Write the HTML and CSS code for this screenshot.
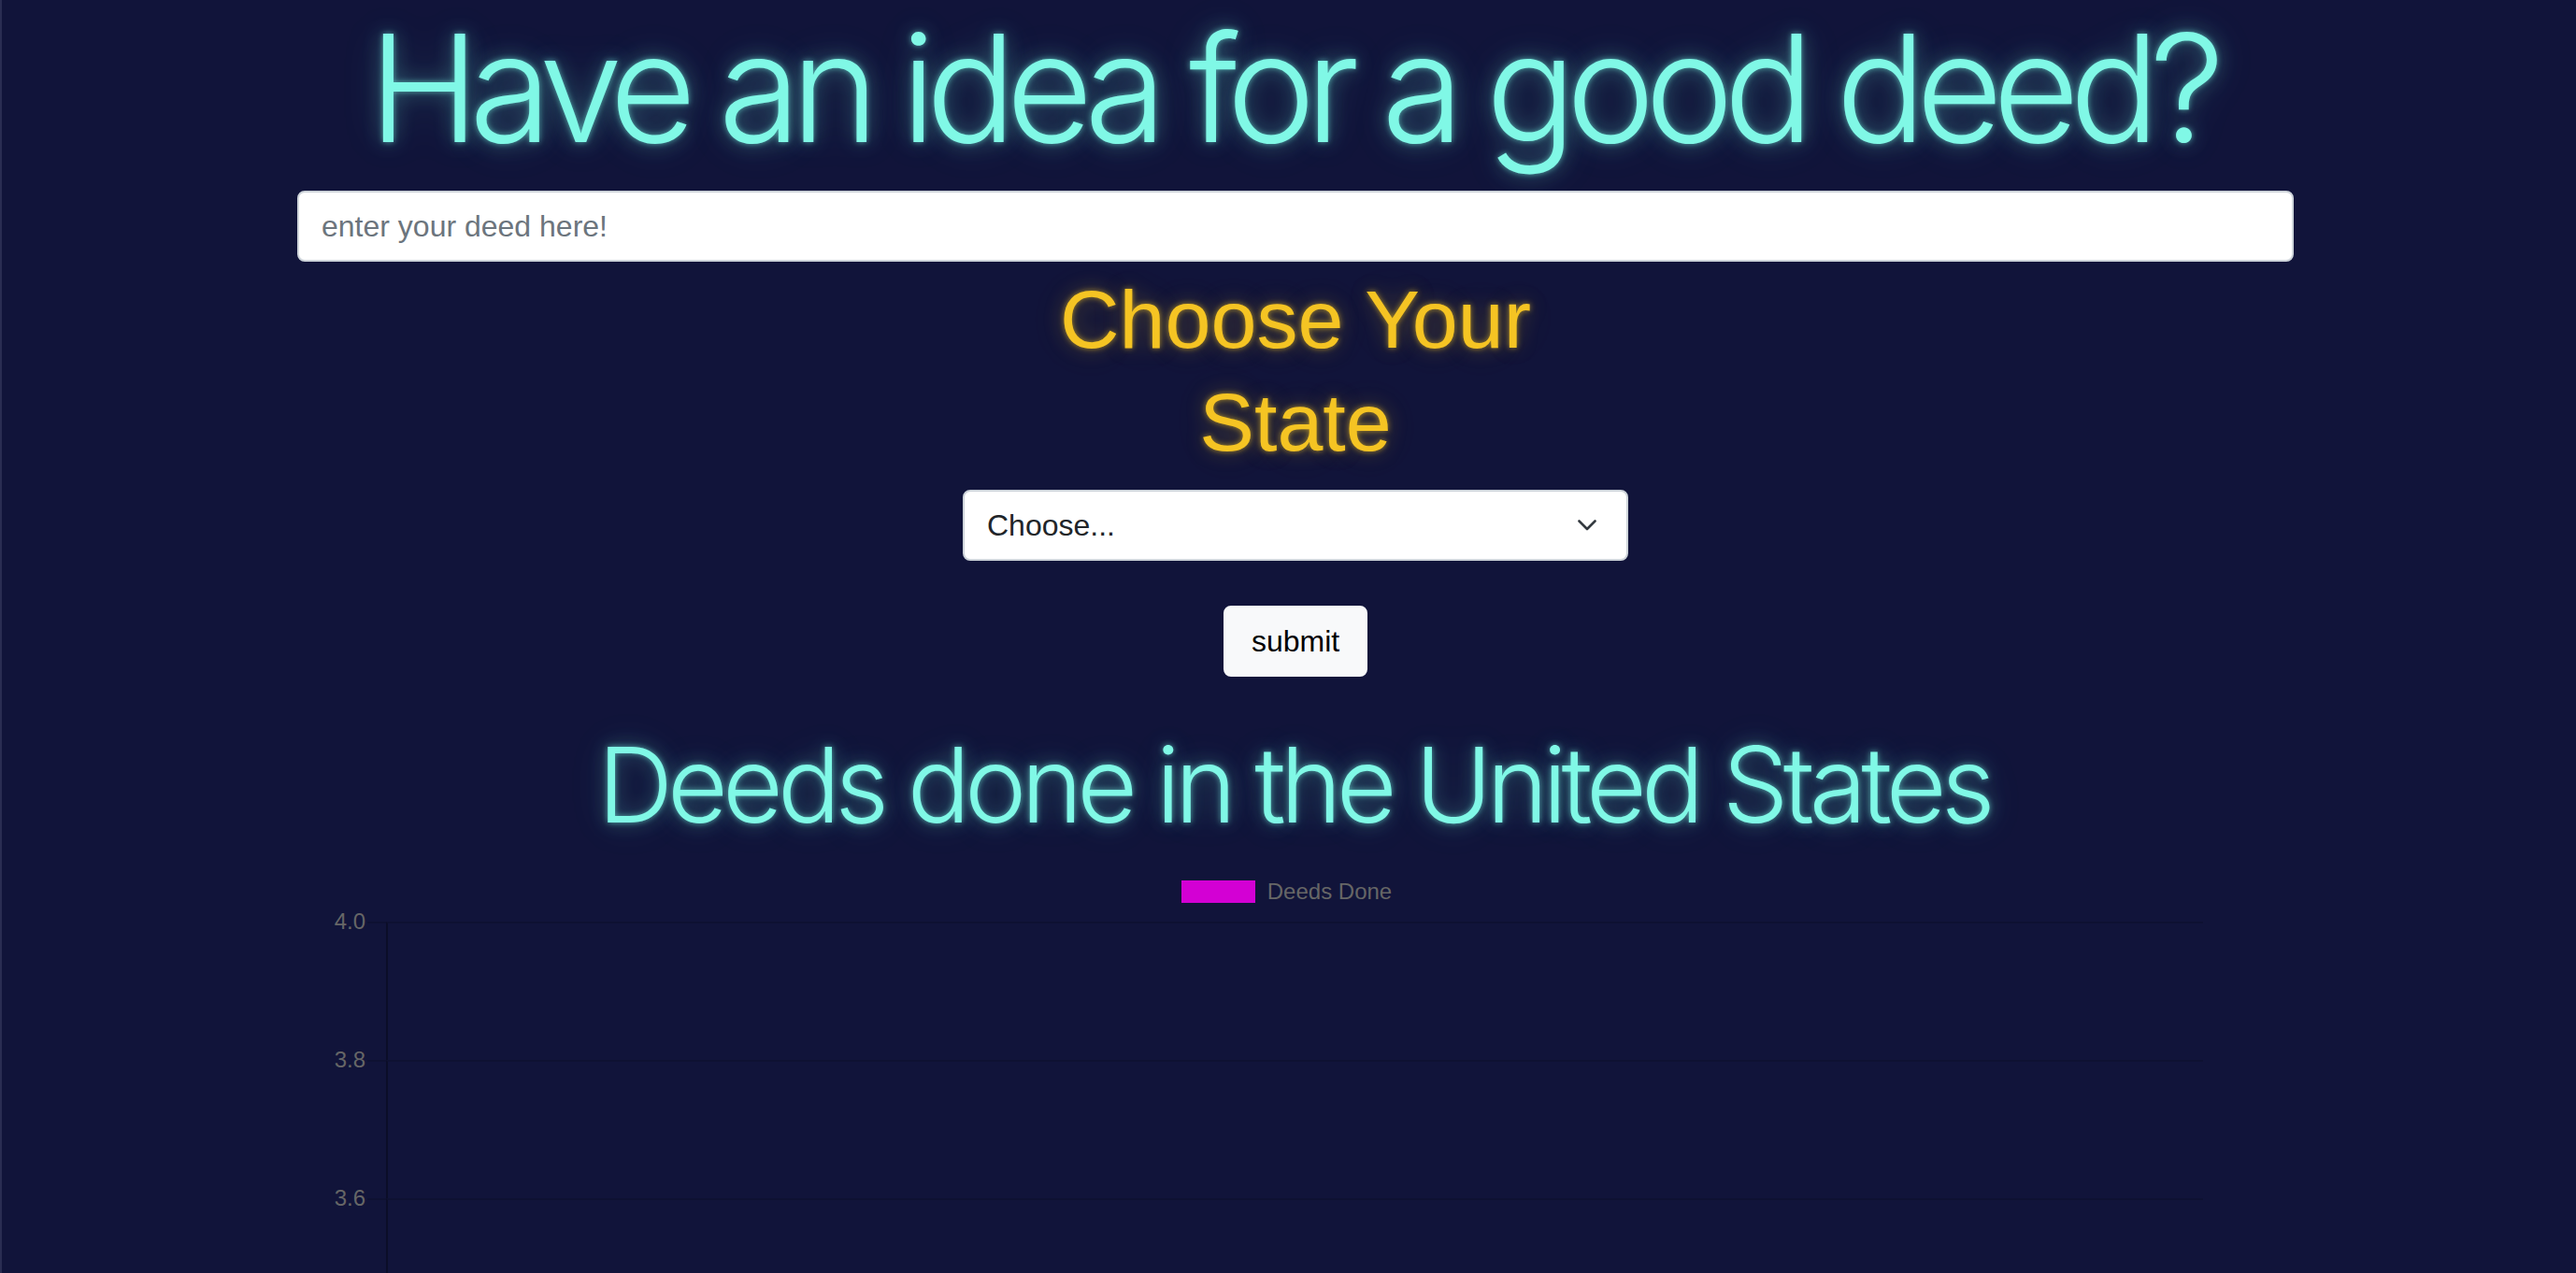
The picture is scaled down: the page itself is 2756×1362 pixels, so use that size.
FILE: index.html
```html
<!DOCTYPE html>
<html lang="en">
<head>
<meta charset="utf-8">
<title>Good Deeds</title>
<link rel="stylesheet" href="styles.css">
</head>
<body>
<main class="page">
  <h1 class="neon-title">Have an idea for a good deed?</h1>
  <input class="deed-input" type="text" placeholder="enter your deed here!">
  <section class="state-col">
    <h2 class="state-title">Choose Your State</h2>
    <div class="state-select" role="combobox" aria-expanded="false">
      <span>Choose...</span>
      <svg class="chevron" width="20" height="12" viewBox="0 0 20 12" aria-hidden="true">
        <polyline points="1.5,1.5 10,10 18.5,1.5" fill="none" stroke="#343a40" stroke-width="2.6" stroke-linecap="round" stroke-linejoin="round"/>
      </svg>
    </div>
    <button class="submit-btn" type="button">submit</button>
  </section>
  <h2 class="deeds-title">Deeds done in the United States</h2>
  <section class="chart">
    <div class="legend">
      <span class="legend-box"></span>
      <span class="legend-text">Deeds Done</span>
    </div>
    <div class="plot">
      <div class="tick-row">
        <span class="tick-label">4.0</span>
        <span class="tick-mark"></span>
        <span class="tick-cell"></span>
      </div>
      <div class="tick-row">
        <span class="tick-label">3.8</span>
        <span class="tick-mark"></span>
        <span class="tick-cell"></span>
      </div>
      <div class="tick-row">
        <span class="tick-label">3.6</span>
        <span class="tick-mark"></span>
        <span class="tick-cell"></span>
      </div>
    </div>
  </section>
</main>
</body>
</html>
```

FILE: styles.css
```css
html, body {
  margin: 0;
  height: 100%;
}

body {
  background: #11143a;
  border-left: 2px solid #2a2d52;
  padding-left: 14px;
  box-sizing: border-box;
  overflow: hidden;
  font-family: "Liberation Sans", Arial, sans-serif;
}

.page {
  width: 2136px;
  margin: 0 auto;
  display: flex;
  flex-direction: column;
  align-items: stretch;
}

.neon-title {
  margin: -2px 0 0;
  font-family: "Inter", "Noto Sans", sans-serif;
  font-weight: 300;
  font-size: 160px;
  line-height: 1.2;
  letter-spacing: -10.6px;
  text-indent: -8px;
  text-align: center;
  white-space: nowrap;
  color: #80f8e6;
  text-shadow: 0 0 6px rgba(120, 250, 230, 0.6), 0 0 22px rgba(120, 250, 230, 0.3), 0 0 44px rgba(120, 250, 230, 0.18);
}

.deed-input {
  margin-top: 14px;
  height: 76px;
  box-sizing: border-box;
  padding: 0 24px;
  border: 2px solid #ced4da;
  border-radius: 8px;
  background: #fff;
  font-family: "Liberation Sans", Arial, sans-serif;
  font-size: 32px;
  color: #212529;
  outline: none;
}

.deed-input::placeholder {
  color: #6c757d;
}

.state-col {
  width: 712px;
  align-self: center;
  display: flex;
  flex-direction: column;
  align-items: stretch;
}

.state-title {
  margin: 7px 0 0;
  font-family: "Liberation Sans", Arial, sans-serif;
  font-weight: 400;
  font-size: 88px;
  line-height: 110px;
  text-align: center;
  color: #f5c423;
  text-shadow: 0 0 6px rgba(245, 196, 35, 0.65), 0 0 22px rgba(245, 196, 35, 0.25), 0 0 44px rgba(245, 196, 35, 0.12);
}

.state-select {
  margin-top: 17px;
  height: 76px;
  box-sizing: border-box;
  padding: 0 32px 0 24px;
  border: 2px solid #ced4da;
  border-radius: 8px;
  background: #fff;
  display: flex;
  align-items: center;
  justify-content: space-between;
  font-size: 32px;
  color: #212529;
}

.chevron {
  display: block;
}

.submit-btn {
  align-self: center;
  margin-top: 48px;
  height: 76px;
  box-sizing: border-box;
  padding: 0 28px;
  border: 2px solid #f8f9fa;
  border-radius: 8px;
  background: #f8f9fa;
  font-family: "Liberation Sans", Arial, sans-serif;
  font-size: 32px;
  color: #000;
}

.deeds-title {
  margin: 48px 0 0;
  font-family: "Inter", "Noto Sans", sans-serif;
  font-weight: 300;
  font-size: 112px;
  line-height: 1.2;
  letter-spacing: -6px;
  text-indent: -4px;
  text-align: center;
  white-space: nowrap;
  color: #80f8e6;
  text-shadow: 0 0 6px rgba(120, 250, 230, 0.6), 0 0 20px rgba(120, 250, 230, 0.3), 0 0 40px rgba(120, 250, 230, 0.18);
}

.chart {
  margin: 36px 97px 0 0;
  display: flex;
  flex-direction: column;
}

.legend {
  display: flex;
  align-items: center;
  justify-content: center;
  gap: 13px;
  height: 24px;
  padding-left: 78px;
}

.legend-box {
  width: 79px;
  height: 24px;
  background: #d300d4;
}

.legend-text {
  font-size: 24px;
  line-height: 24px;
  color: #666;
}

.plot {
  margin-top: 20px;
  display: flex;
  flex-direction: column;
}

.tick-row {
  display: flex;
  height: 148px;
}

.tick-label {
  width: 73px;
  margin-top: -12px;
  height: 24px;
  line-height: 24px;
  font-size: 24px;
  color: #666;
  text-align: right;
}

.tick-mark {
  width: 20px;
  margin-left: 2px;
  border-top: 2px solid rgba(0, 0, 0, 0.12);
}

.tick-cell {
  flex: 1;
  border-top: 2px solid rgba(0, 0, 0, 0.12);
  border-left: 2px solid rgba(0, 0, 0, 0.3);
}
```
